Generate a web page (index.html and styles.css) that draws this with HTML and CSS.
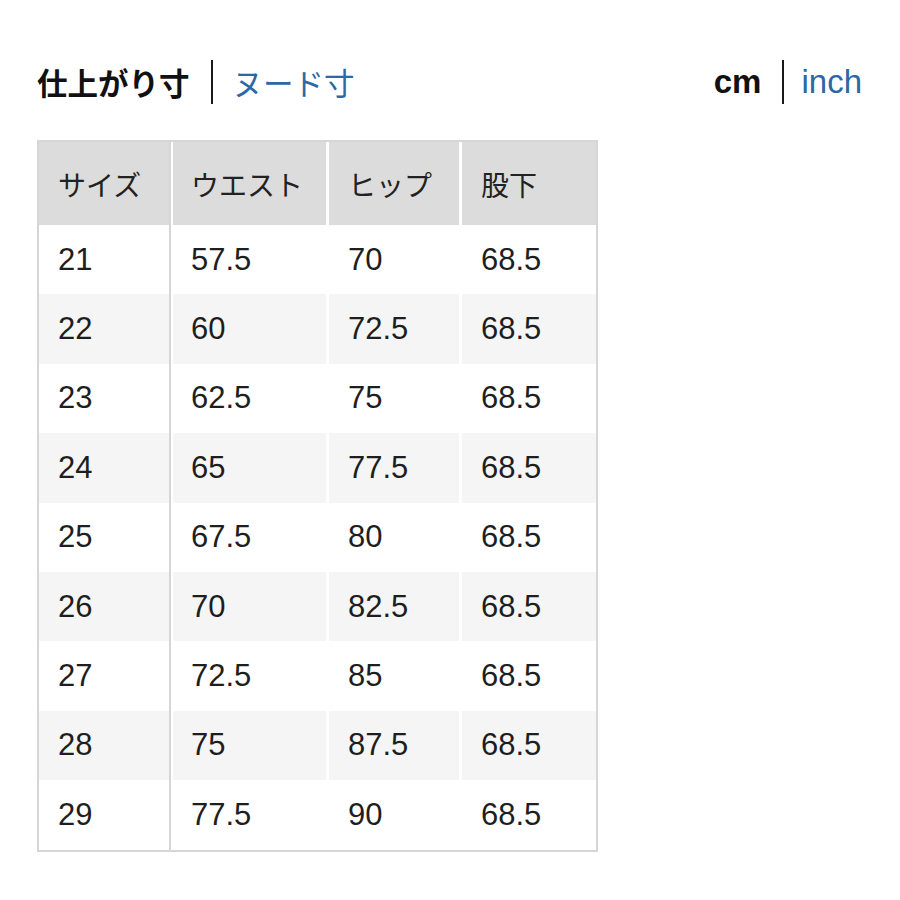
FILE: index.html
```html
<!DOCTYPE html>
<html lang="ja">
<head>
<meta charset="utf-8">
<title>サイズ表</title>
<link rel="stylesheet" href="styles.css">
</head>
<body>
<div class="page">
  <div class="topbar">
    <div class="toggle">
      <span class="opt active jp">仕上がり寸</span>
      <span class="sep"></span>
      <span class="opt link jp">ヌード寸</span>
    </div>
    <div class="toggle">
      <span class="opt active lat">cm</span>
      <span class="sep sep-unit"></span>
      <span class="opt link lat">inch</span>
    </div>
  </div>
  <table class="size-table">
    <thead>
      <tr><th>サイズ</th><th>ウエスト</th><th>ヒップ</th><th>股下</th></tr>
    </thead>
    <tbody>
      <tr><td>21</td><td>57.5</td><td>70</td><td>68.5</td></tr>
      <tr><td>22</td><td>60</td><td>72.5</td><td>68.5</td></tr>
      <tr><td>23</td><td>62.5</td><td>75</td><td>68.5</td></tr>
      <tr><td>24</td><td>65</td><td>77.5</td><td>68.5</td></tr>
      <tr><td>25</td><td>67.5</td><td>80</td><td>68.5</td></tr>
      <tr><td>26</td><td>70</td><td>82.5</td><td>68.5</td></tr>
      <tr><td>27</td><td>72.5</td><td>85</td><td>68.5</td></tr>
      <tr><td>28</td><td>75</td><td>87.5</td><td>68.5</td></tr>
      <tr><td>29</td><td>77.5</td><td>90</td><td>68.5</td></tr>
    </tbody>
  </table>
</div>
</body>
</html>
```
FILE: styles.css
```css
html, body {
  margin: 0;
  padding: 0;
  background: #fff;
}
.page {
  width: 900px;
  box-sizing: border-box;
  padding: 60px 38px 0 37px;
  font-family: "Liberation Sans", "Noto Sans CJK JP", sans-serif;
  color: #1a1a1a;
}
.topbar {
  display: flex;
  justify-content: space-between;
  align-items: center;
  height: 44px;
}
.toggle {
  display: flex;
  align-items: center;
  height: 44px;
}
.sep {
  width: 2px;
  height: 44px;
  background: #1a1a1a;
  margin: 0 20px 0 21px;
}
.sep-unit {
  margin: 0 17px 0 21px;
}
.opt.jp {
  font-family: "Noto Sans CJK JP", sans-serif;
  font-size: 30.5px;
  line-height: 44px;
}
.opt.lat {
  font-family: "Liberation Sans", sans-serif;
  font-size: 33px;
  line-height: 44px;
}
.opt.active {
  font-weight: 700;
  color: #111;
}
.opt.link {
  color: #2c68a6;
  font-weight: 400;
}
.size-table {
  margin-top: 36px;
  border-collapse: separate;
  border-spacing: 0;
  border: 2px solid #d6d6d6;
  table-layout: fixed;
  width: 561px;
}
.size-table th,
.size-table td {
  padding: 0 0 0 19px;
  text-align: left;
  vertical-align: middle;
  box-sizing: border-box;
}
.size-table th:nth-child(1), .size-table td:nth-child(1) {
  width: 132px;
  border-right: 2px solid #d6d6d6;
}
.size-table th:nth-child(2), .size-table td:nth-child(2) {
  width: 158px;
  border-right: 3px solid #fff;
  border-left: 2px solid #fff;
  padding-left: 18px;
}
.size-table th:nth-child(3), .size-table td:nth-child(3) {
  width: 133px;
  border-right: 3px solid #fff;
}
.size-table th:nth-child(4), .size-table td:nth-child(4) {
  width: 134px;
}
.size-table th {
  height: 83px;
  background: #dcdcdc;
  font-family: "Noto Sans CJK JP", sans-serif;
  font-size: 28px;
  font-weight: 400;
  color: #222;
}
.size-table td {
  height: 69.4px;
  font-family: "Liberation Sans", sans-serif;
  font-size: 31px;
  color: #1e1e1e;
}
.size-table tbody tr:nth-child(even) td {
  background: #f5f5f5;
}
```
